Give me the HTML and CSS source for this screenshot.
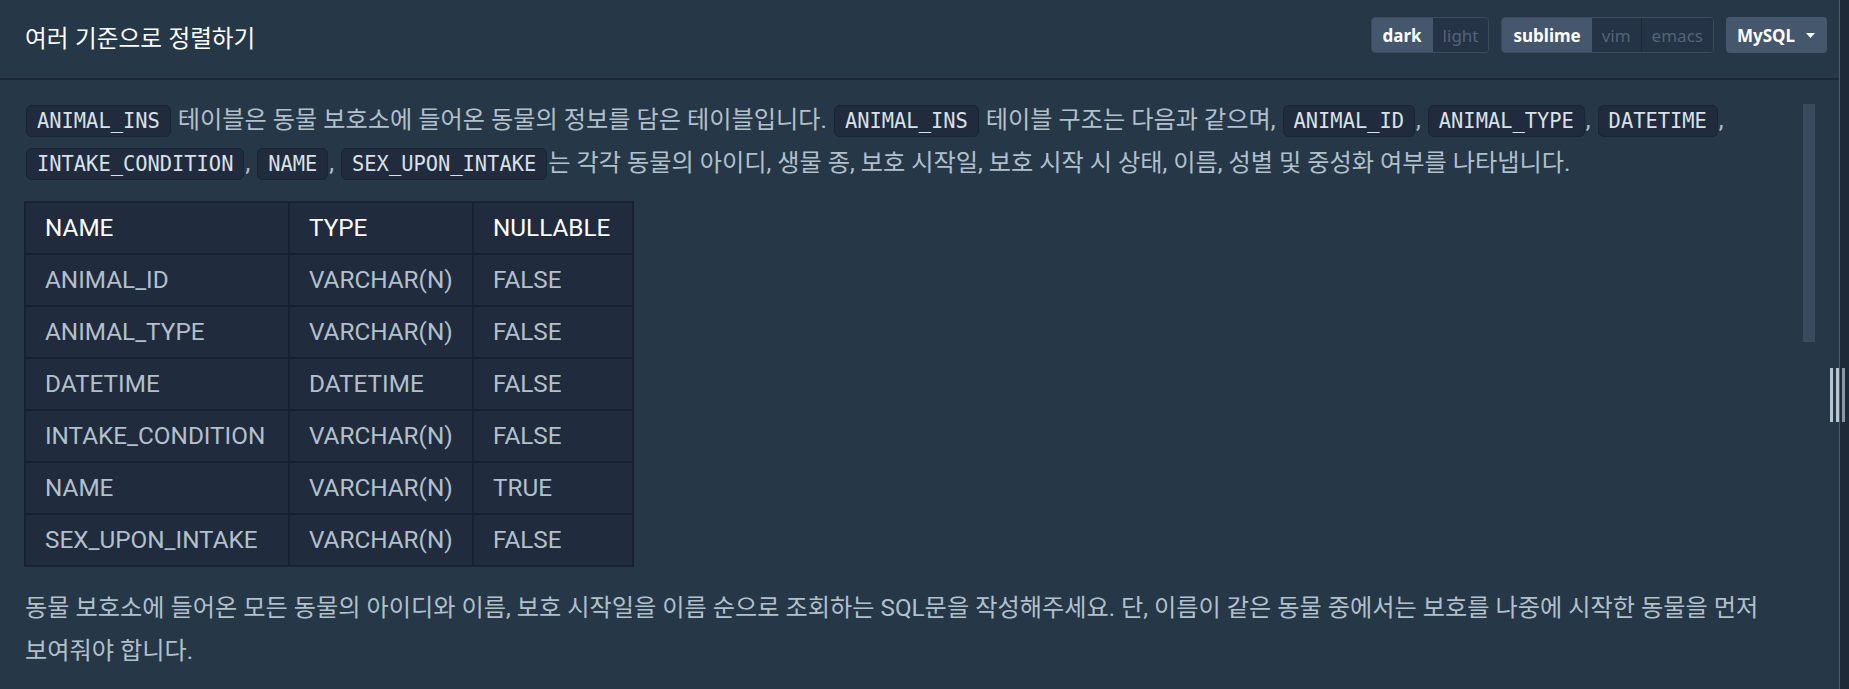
FILE: index.html
```html
<!DOCTYPE html>
<html lang="ko">
<head>
<meta charset="utf-8">
<title>여러 기준으로 정렬하기</title>
<link rel="stylesheet" href="styles.css">
</head>
<body>
<div class="app">
  <div class="panel">
    <header class="hdr">
      <h1 class="title">여러 기준으로 정렬하기</h1>
      <div class="controls">
        <div class="seg"><span class="opt on">dark</span><span class="opt">light</span></div>
        <div class="seg"><span class="opt on">sublime</span><span class="opt">vim</span><span class="opt sep">emacs</span></div>
        <div class="dd">MySQL <svg class="caret" width="9" height="5" viewBox="0 0 9 5"><path d="M0 0h9L4.5 5z" fill="#fff"/></svg></div>
      </div>
    </header>
    <div class="body">
      <div class="desc">
        <p><code>ANIMAL_INS</code> 테이블은 동물 보호소에 들어온 동물의 정보를 담은 테이블입니다. <code>ANIMAL_INS</code> 테이블 구조는 다음과 같으며, <code>ANIMAL_ID</code>, <code>ANIMAL_TYPE</code>, <code>DATETIME</code>, <code>INTAKE_CONDITION</code>, <code>NAME</code>, <code>SEX_UPON_INTAKE</code>는 각각 동물의 아이디, 생물 종, 보호 시작일, 보호 시작 시 상태, 이름, 성별 및 중성화 여부를 나타냅니다.</p>
        <table class="schema">
          <colgroup><col class="c1"><col class="c2"><col class="c3"></colgroup>
          <thead><tr><th>NAME</th><th>TYPE</th><th>NULLABLE</th></tr></thead>
          <tbody>
            <tr><td>ANIMAL_ID</td><td>VARCHAR(N)</td><td>FALSE</td></tr>
            <tr><td>ANIMAL_TYPE</td><td>VARCHAR(N)</td><td>FALSE</td></tr>
            <tr><td>DATETIME</td><td>DATETIME</td><td>FALSE</td></tr>
            <tr><td>INTAKE_CONDITION</td><td>VARCHAR(N)</td><td>FALSE</td></tr>
            <tr><td>NAME</td><td>VARCHAR(N)</td><td>TRUE</td></tr>
            <tr><td>SEX_UPON_INTAKE</td><td>VARCHAR(N)</td><td>FALSE</td></tr>
          </tbody>
        </table>
        <p>동물 보호소에 들어온 모든 동물의 아이디와 이름, 보호 시작일을 이름 순으로 조회하는 SQL문을 작성해주세요. 단, 이름이 같은 동물 중에서는 보호를 나중에 시작한 동물을 먼저 보여줘야 합니다.</p>
      </div>
      <div class="thumb"></div>
    </div>
  </div>
  <div class="gutter">
    <div class="handle"><span></span><span></span><span class="dim"></span></div>
  </div>
</div>
</body>
</html>
```

FILE: styles.css
```css
html, body {
  margin: 0;
  padding: 0;
  background: #263747;
}
body {
  font-family: Roboto, "Noto Sans CJK KR", sans-serif;
  color: #b2c0cc;
}
.app {
  display: flex;
  width: 1849px;
  height: 689px;
  overflow: hidden;
}
.panel {
  flex: 0 0 1839px;
  display: flex;
  flex-direction: column;
  min-width: 0;
}
.hdr {
  height: 80px;
  flex: 0 0 80px;
  box-sizing: border-box;
  display: flex;
  align-items: center;
  justify-content: space-between;
  padding: 0 12px 6px 25px;
  border-bottom: 2px solid #1c2836;
}
.title {
  margin: 0;
  padding-top: 2px;
  font-family: "Noto Sans CJK KR", sans-serif;
  font-size: 23.6px;
  font-weight: 400;
  color: #ffffff;
  line-height: 32px;
}
.controls {
  display: flex;
  gap: 12px;
  align-items: center;
  margin-top: -2px;
}
.seg {
  display: flex;
  height: 36px;
  box-sizing: border-box;
  border: 1px solid #3a4a5d;
  border-radius: 4px;
  overflow: hidden;
}
.opt {
  display: flex;
  align-items: center;
  padding: 0 10px;
  font-family: "Noto Sans", sans-serif;
  font-size: 17px;
  color: #53647a;
  background: #243345;
}
.opt.on {
  background: #44576c;
  color: #ffffff;
  font-weight: 700;
  padding: 0 11px;
}
.opt.sep {
  border-left: 1px solid #1d2937;
}
.dd {
  display: flex;
  align-items: center;
  gap: 11px;
  height: 36px;
  padding: 0 12px 0 11px;
  background: #44576c;
  border-radius: 4px;
  color: #ffffff;
  font-family: "Noto Sans", sans-serif;
  font-size: 17px;
  font-weight: 700;
}
.body {
  position: relative;
  flex: 1;
  overflow: hidden;
}
.desc {
  padding: 19px 49px 0 25px;
  font-size: 24.2px;
  line-height: 43px;
  word-break: keep-all;
}
.desc p {
  margin: 0;
}
code {
  font-family: "DejaVu Sans Mono", monospace;
  font-size: 20.4px;
  line-height: 24px;
  padding: 3px 10px;
  margin: 0 1px;
  color: #d9e1e8;
  background: #202b3d;
  border: 1px solid #1a2433;
  border-radius: 6px;
}
.schema {
  margin: 16px 0 20px -1px;
  border-collapse: collapse;
  table-layout: fixed;
  width: 608px;
  background: #202b3d;
  font-family: Roboto, sans-serif;
  font-size: 24.3px;
}
.schema col.c1 { width: 264px; }
.schema col.c2 { width: 184px; }
.schema col.c3 { width: 160px; }
.schema th,
.schema td {
  border: 2px solid #172131;
  padding: 0 0 0 19px;
  height: 52px;
  box-sizing: border-box;
  text-align: left;
  font-weight: 400;
  white-space: nowrap;
  line-height: 30px;
}
.schema th {
  color: #ffffff;
}
.schema td {
  color: #b2c0cc;
}
.thumb {
  position: absolute;
  right: 24px;
  top: 24px;
  width: 12px;
  height: 238px;
  background: #3a4b5f;
}
.gutter {
  position: relative;
  flex: 0 0 10px;
  box-sizing: border-box;
  border-left: 1px solid #4b5b6c;
  background: #1f2a39;
}
.handle {
  position: absolute;
  left: -10px;
  top: 368px;
  display: flex;
  gap: 3px;
}
.handle span {
  width: 3px;
  height: 54px;
  background: #b9c5cf;
}
.handle span.dim {
  background: #8a96a1;
}
```
